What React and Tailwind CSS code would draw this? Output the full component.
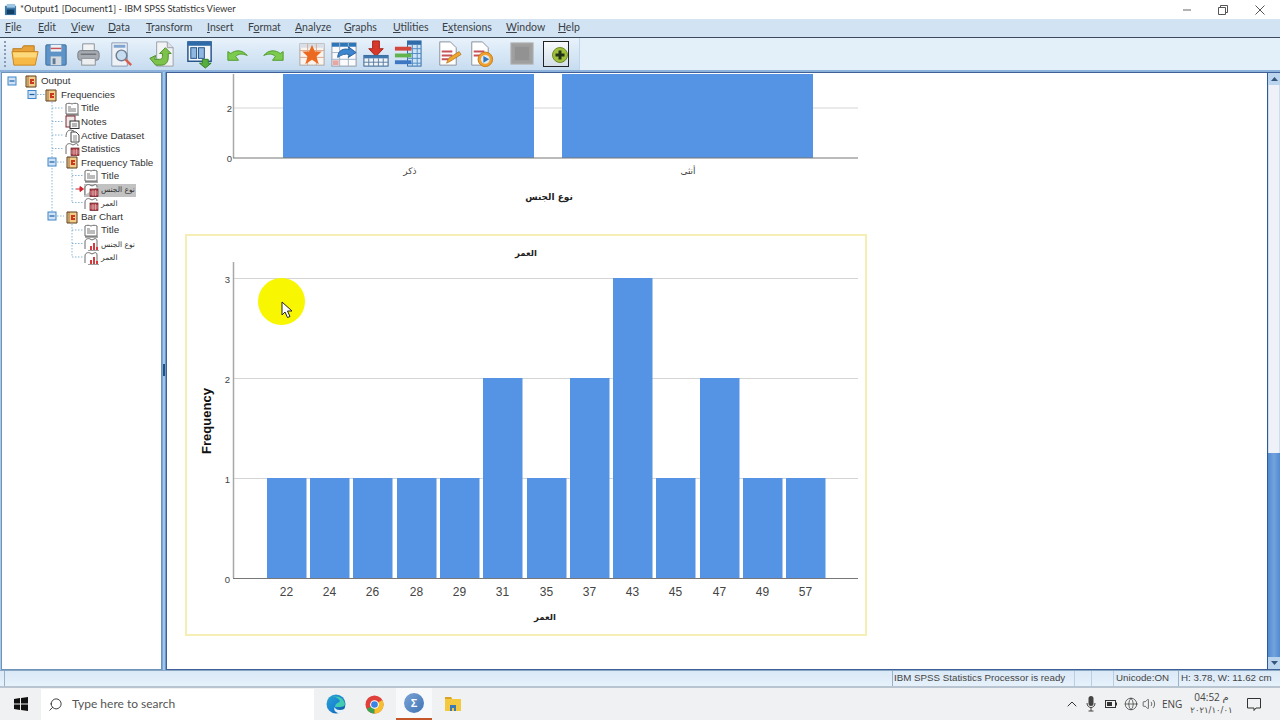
import React from "react";
import { Search, ChevronUp, Globe, Volume2 } from "lucide-react";

const menu = [
  ["", "F", "ile", "w-[33px]"], ["", "E", "dit", "w-[33px]"], ["", "V", "iew", "w-[37px]"], ["", "D", "ata", "w-[38px]"],
  ["", "T", "ransform", "w-[61px]"], ["", "I", "nsert", "w-[41px]"], ["F", "o", "rmat", "w-[47px]"], ["", "A", "nalyze", "w-[49px]"],
  ["", "G", "raphs", "w-[49px]"], ["", "U", "tilities", "w-[49px]"], ["E", "x", "tensions", "w-[64px]"], ["", "W", "indow", "w-[52px]"], ["", "H", "elp", "w-[30px]"],
];

const Page = ({ fill = "#fff" }) => (
  <path d="M7 3h11l6 6v18H7z" fill={fill} stroke="#8a8f98" strokeWidth="1" />
);

const tools = [
  ["w-[31px]", <g key="a"><path d="M3 10h9l2-3h11v6H3z" fill="#e8a33a" stroke="#b97a1c" /><path d="M2 13h27l-3 14H4z" fill="#f7b945" stroke="#c98622" /><path d="M3 14h25l-1 5H4z" fill="#fcd97c" /></g>],
  ["w-[32px]", <g key="b"><rect x="5" y="6" width="21" height="21" rx="1" fill="#5d93c6" stroke="#3d6f9f" /><rect x="10" y="6" width="11" height="7" fill="#eef1f4" /><rect x="10" y="9" width="11" height="1.5" fill="#c8505a" /><rect x="10" y="18" width="11" height="9" fill="#d4d9de" /><rect x="12" y="20" width="3" height="6" fill="#5d7a96" /></g>],
  ["w-[33px]", <g key="c"><path d="M10 5h12v8H10z" fill="#f2f3f5" stroke="#8b9097" /><rect x="5" y="12" width="22" height="10" rx="3" fill="#a6abb1" stroke="#787d84" /><rect x="9" y="20" width="14" height="7" fill="#eceef0" stroke="#8b9097" /><rect x="8" y="15" width="16" height="1.5" fill="#6f747a" /></g>],
  ["w-[40px]", <g key="d"><path d="M6 4h16v24H6z" fill="#eef1f6" stroke="#8a9bb3" /><rect x="8" y="6" width="12" height="3" fill="#7fa4cf" /><circle cx="16" cy="17" r="5.5" fill="#c7dcef" stroke="#6d7f95" strokeWidth="1.5" /><path d="M20 21l6 6" stroke="#d8604f" strokeWidth="2.5" /></g>],
  ["w-[39px]", <g key="e"><path d="M11 3h11l6 6v19H11z" fill="#f2f3f5" stroke="#9a9fa6" /><path d="M22 3v6h6" fill="#dcdfe3" stroke="#9a9fa6" /><path d="M4 20l6 7h6c5 0 7-4 7-8v-4h3l-6-6-6 6h3v3c0 2-1 3-3 3h-5l1-4z" fill="#7cc24b" stroke="#4e8f2a" /></g>],
  ["w-[39px]", <g key="f"><rect x="3" y="3" width="24" height="20" fill="#f4f6f9" stroke="#24548c" strokeWidth="1.5" /><rect x="3" y="3" width="24" height="4" fill="#2f6aa8" /><rect x="6" y="9" width="6" height="11" fill="#8fb7e0" stroke="#24548c" /><rect x="14" y="9" width="6" height="11" fill="#8fb7e0" stroke="#24548c" /><path d="M18 21h6v4h3l-6 5-6-5h3z" fill="#58ad3f" stroke="#2f7d25" /></g>],
  ["w-[33px]", <path key="g" d="M4 22v-9l3 2c5-4 12-4 17 2-5-2-9-2-12 1l3 4z" fill="#7ccb4e" stroke="#4f9a2d" />],
  ["w-[40px]", <path key="h" d="M27 22v-9l-3 2c-5-4-12-4-17 2 5-2 9-2 12 1l-3 4z" fill="#7ccb4e" stroke="#4f9a2d" />],
  ["w-[32px]", <g key="i"><rect x="3" y="5" width="25" height="22" fill="#f9f4ee" stroke="#a9a6a2" /><rect x="3" y="5" width="25" height="4" fill="#d8dfe8" /><path d="M3 12h25M3 19h25M11 5v22M20 5v22" stroke="#d9a78e" /><path d="M15.500 6l3 7h7l-5.500 5 2.500 8-7-4.500-7 4.500 2.500-8-5.500-5h7z" fill="#ec6a1f" /></g>],
  ["w-[32px]", <g key="j"><rect x="3" y="4" width="25" height="24" fill="#fbfbfd" stroke="#8e98a6" /><rect x="3" y="4" width="25" height="4" fill="#2e76b8" /><path d="M3 14h25M3 21h25M11 4v24M20 4v24" stroke="#9fb3c9" /><rect x="4" y="22" width="6" height="5" fill="#e9a6a0" /><path d="M9 19c0-7 6-10 12-8l-1-3 8 6-8 5 1-3c-4-1-8 0-12 3z" fill="#3d86cf" stroke="#25609f" /></g>],
  ["w-[32px]", <g key="k"><path d="M12 2h7v8h4l-7.500 8-7.500-8h4z" fill="#d6382b" stroke="#a62319" /><rect x="3" y="17" width="25" height="11" fill="#f0f3f7" stroke="#32608f" /><rect x="3" y="17" width="25" height="3" fill="#3d77ad" /><path d="M3 24h25M8 20v8M13 20v8M18 20v8M23 20v8" stroke="#5b7fa3" /></g>],
  ["w-[40px]", <g key="l"><rect x="15" y="2" width="14" height="26" fill="#cfe3f4" stroke="#2f6ba8" /><rect x="15" y="2" width="14" height="4" fill="#2f6ba8" /><path d="M15 10h14M15 15h14M15 20h14M15 25h14M20 6v22M25 6v22" stroke="#4f8cc4" /><rect x="2" y="8" width="17" height="4" fill="#d4473d" /><rect x="2" y="15" width="17" height="4" fill="#62b34b" /><rect x="2" y="22" width="17" height="4" fill="#3d77c4" /></g>],
  ["w-[32px]", <g key="m"><Page /><path d="M9 12h11v2H9zM9 16h11v2H9zM9 20h7v2H9z" fill="#c7525a" /><path d="M14 25l2-5 11-7 2 3-11 7z" fill="#f0a62f" stroke="#a96f16" strokeWidth=".7" /></g>],
  ["w-[42px]", <g key="n"><Page /><path d="M9 12h11v2H9zM9 16h8v2H9z" fill="#c7525a" /><circle cx="21" cy="21" r="7.500" fill="#f0a02e" stroke="#c77a14" /><circle cx="21" cy="21" r="4.500" fill="#dceaf7" /><path d="M19 17.500l6 3.500-6 3.500z" fill="#2f76bd" /></g>],
  ["w-[36px]", <g key="o"><rect x="4" y="4" width="23" height="22" fill="#9f9f9f" stroke="#b5b5b5" /><rect x="8" y="8" width="15" height="14" fill="#929292" /></g>],
];

function BookIcon({ kind }) {
  return (
    <svg viewBox="0 0 15 14" className="w-[15px] h-[14px] shrink-0">
      {kind === "title" ? (
        <g>
          <path d="M1 2c2-1 4-1 6 0 2-1 4-1 6 0v10H1z" fill="#fff" stroke="#6b6b6b" />
          <path d="M3 5h3M3 7h8M3 9h8" stroke="#555" strokeWidth=".8" />
          <path d="M1 13h13" stroke="#555" />
        </g>
      ) : kind === "notes" ? (
        <g>
          <rect x="1" y="1" width="9" height="11" fill="#efe9e9" stroke="#7d2b33" />
          <rect x="5" y="6" width="9" height="7.500" fill="#f7f7f7" stroke="#333" />
          <path d="M7 9h5M7 11h5" stroke="#555" strokeWidth=".8" />
        </g>
      ) : kind === "doc" ? (
        <g>
          <path d="M1 8c0-5 2-7 5-7l3 1v4" fill="#fff" stroke="#6b6b6b" />
          <path d="M6 3h5l3 3v7H6z" fill="#fff" stroke="#444" />
          <path d="M8 7h4M8 9h4M8 11h4" stroke="#666" strokeWidth=".8" />
        </g>
      ) : kind === "table" ? (
        <g>
          <path d="M1 12V5c0-3 3-4 5-3l2 1 2-1c2-1 3 0 3 2" fill="#fff" stroke="#6b6b6b" />
          <rect x="6" y="6" width="8" height="7.500" fill="#b4434b" stroke="#652228" strokeWidth=".7" />
          <path d="M6 9h8M6 11h8M9 7v6M11.500 7v6" stroke="#e9c9cb" strokeWidth=".6" />
        </g>
      ) : (
        <g>
          <path d="M1 12V5c0-3 3-4 5-3l2 1 2-1c2-1 3 0 3 2v8" fill="#fff" stroke="#6b6b6b" />
          <path d="M6 13V9h2v4zM9 13V6h2v7zM12 13v-3h2v3z" fill="#d43b3f" />
          <path d="M4 13.500h11" stroke="#777" strokeWidth=".7" />
        </g>
      )}
    </svg>
  );
}

const FolderNode = () => (
  <svg viewBox="0 0 12 13" className="w-[12px] h-[13px] shrink-0">
    <path d="M1 1h10v11H1z" fill="#f3cc8a" stroke="#5a3c1c" />
    <path d="M3 1v11" stroke="#5a3c1c" strokeWidth=".6" />
    <path d="M5 4h4v2H7v1h2v2H5z" fill="#c8391f" />
  </svg>
);

const tree = [
  ["Output", "folder", "pl-[23px]", "ml-[4px]"],
  ["Frequencies", "folder", "pl-[43px]", "ml-[4px]"],
  ["Title", "title", "pl-[63px]", "ml-[1px]"],
  ["Notes", "notes", "pl-[63px]", "ml-[1px]"],
  ["Active Dataset", "doc", "pl-[63px]", "ml-[1px]"],
  ["Statistics", "table", "pl-[63px]", "ml-[1px]"],
  ["Frequency Table", "folder", "pl-[64px]", "ml-[3px]"],
  ["Title", "title", "pl-[82px]", "ml-[2px]"],
  ["نوع الجنس", "table", "pl-[82px]", "ml-[2px]", true],
  ["العمر", "table", "pl-[82px]", "ml-[2px]"],
  ["Bar Chart", "folder", "pl-[64px]", "ml-[3px]"],
  ["Title", "title", "pl-[82px]", "ml-[2px]"],
  ["نوع الجنس", "bar", "pl-[82px]", "ml-[2px]"],
  ["العمر", "bar", "pl-[82px]", "ml-[2px]"],
];

const Box = ({ x, y }) => (
  <g>
    <rect x={x - 4} y={y - 4} width="8" height="8" fill="#cfe2f6" stroke="#3c86c9" />
    <path d={`M${x - 2.500} ${y}h5`} stroke="#1d5f9f" strokeWidth="1.200" />
  </g>
);

function TreeLines() {
  const dash = { stroke: "#6fa3c9", strokeWidth: 0.8, strokeDasharray: "1.500 1.500" };
  return (
    <svg className="absolute left-0 top-0 pointer-events-none" width="159" height="200" viewBox="2 73 159 200">
      <path d="M37 94.500h8M52 99v113M52 108h12M52 121.500h12M52 135h12M52 148.500h12M57 162h7M57 216h7M72 167v36M72 175.500h12M72 189h4M72 202.500h12M72 221v36M72 230h12M72 243.500h12M72 257h12" fill="none" {...dash} />
      <Box x={12} y={81} />
      <Box x={32} y={94.500} />
      <Box x={52} y={162} />
      <Box x={52} y={216} />
      <path d="M76 189h4v-2.500l3.500 2.500-3.500 2.500V189" fill="#d4202a" stroke="#d4202a" />
    </svg>
  );
}

function Chart1() {
  return (
    <svg width="682" height="136" viewBox="185 74 682 136" className="block ml-[18px]" style={{ fontFamily: "'DejaVu Sans','Liberation Sans',sans-serif" }}>
      <path d="M233 108h625" stroke="#d5d5d5" />
      <rect x="283" y="74" width="251" height="84" fill="#5594e4" />
      <rect x="562" y="74" width="251" height="84" fill="#5594e4" />
      <path d="M233.500 74v84" stroke="#a8a8a8" strokeWidth="1.500" />
      <path d="M233 158h625" stroke="#777" />
      <g fontFamily="'Liberation Sans',sans-serif" fontSize="9.500" fill="#444" textAnchor="end">
        <text x="232" y="112">2</text>
        <text x="232" y="162">0</text>
      </g>
      <g fontSize="9" fill="#444" textAnchor="middle">
        <text x="410" y="174">ذكر</text>
        <text x="688" y="174">أنثى</text>
      </g>
      <text x="549" y="200" fontSize="9" fontWeight="700" fill="#222" textAnchor="middle">نوع الجنس</text>
    </svg>
  );
}

const bars = [[22, 267, 1], [24, 310, 1], [26, 353, 1], [28, 397, 1], [29, 440, 1], [31, 483, 2], [35, 527, 1], [37, 570, 2], [43, 613, 3], [45, 656, 1], [47, 700, 2], [49, 743, 1], [57, 786, 1]];

function Chart2() {
  return (
    <div className="relative w-[682px] h-[402px] ml-[18px] mt-[24px] border-2 border-[#f6efb4]">
      <svg width="678" height="398" viewBox="187 236 678 398" className="block" style={{ fontFamily: "'DejaVu Sans','Liberation Sans',sans-serif" }}>
        <path d="M233 278.500h625M233 378.500h625M233 478.500h625" stroke="#d5d5d5" />
        {bars.map(([l, x, v]) => (
          <rect key={l} x={x} y={578 - v * 100} width="39.500" height={v * 100} fill="#5594e4" />
        ))}
        <path d="M233.500 262v316" stroke="#a8a8a8" strokeWidth="1.500" />
        <path d="M233 578.500h625" stroke="#777" />
        <g fontFamily="'Liberation Sans',sans-serif" fontSize="9.500" fill="#444" textAnchor="end">
          <text x="230" y="283">3</text>
          <text x="230" y="383">2</text>
          <text x="230" y="483">1</text>
          <text x="230" y="583">0</text>
        </g>
        <g fontFamily="'Liberation Sans',sans-serif" fontSize="12" fill="#444" textAnchor="middle">
          {bars.map(([l, x]) => (
            <text key={l} x={x + 19.500} y="596">{l}</text>
          ))}
        </g>
        <text x="526" y="256" fontSize="8.500" fontWeight="700" fill="#222" textAnchor="middle">العمر</text>
        <text x="545" y="620" fontSize="8.500" fontWeight="700" fill="#222" textAnchor="middle">العمر</text>
        <text transform="translate(211 421) rotate(-90)" fontFamily="'Liberation Sans',sans-serif" fontSize="13" fontWeight="700" fill="#111" textAnchor="middle">Frequency</text>
      </svg>
      <div className="absolute left-[71px] top-[42px] w-[47px] h-[47px] rounded-full bg-[#f8f600]" />
      <svg className="absolute left-[94px] top-[65px]" width="12" height="18" viewBox="0 0 12 18">
        <path d="M1 1v13l3-3 2.500 5.500 2.500-1-2.500-5.500h4.500z" fill="#fff" stroke="#222" strokeWidth="1" />
      </svg>
    </div>
  );
}

export default function App() {
  return (
    <div className="w-[1280px] h-[720px] overflow-hidden flex flex-col bg-white text-[#222]" style={{ fontFamily: "'Liberation Sans',sans-serif" }}>
      {/* Title bar */}
      <div className="h-[19px] flex items-center bg-white shrink-0">
        <svg viewBox="0 0 14 14" className="w-[13px] h-[13px] ml-[4px]">
          <rect x="1" y="3" width="12" height="10" fill="#3b78a8" />
          <rect x="3" y="1" width="9" height="4" fill="#9ec6e2" />
          <rect x="3" y="7" width="8" height="5" fill="#123f66" />
        </svg>
        <span className="ml-[3px] text-[9.400px] text-[#333]" style={{ fontFamily: "Lato,sans-serif" }}>*Output1 [Document1] - IBM SPSS Statistics Viewer</span>
        <div className="ml-auto flex items-center text-[#555]">
          <svg width="10" height="10" viewBox="0 0 10 10" className="mr-[26px]"><path d="M1 5h8" stroke="#666" /></svg>
          <svg width="10" height="10" viewBox="0 0 10 10" className="mr-[27px]"><path d="M.5 2.500h7v7h-7zM2.500 2.500v-2h7v7h-2" fill="none" stroke="#555" /></svg>
          <svg width="10" height="10" viewBox="0 0 10 10" className="mr-[15px]"><path d="M.5 .5l9 9M9.500 .5l-9 9" stroke="#555" /></svg>
        </div>
      </div>

      {/* Menu bar */}
      <div className="h-[19px] flex items-center pl-[5px] bg-[#d2e3f3] border-b border-[#3a4a5c] text-[10.500px] text-[#3a3f45] shrink-0" style={{ fontFamily: "Lato,sans-serif" }}>
        {menu.map(([a, u, b, w]) => (
          <span key={u + b} className={w}>{a}<span className="underline">{u}</span>{b}</span>
        ))}
      </div>

      {/* Toolbar */}
      <div className="h-[34px] flex bg-[#e3eff9] border-b-[2px] border-[#8cb2dc] shrink-0">
        <div className="w-[580px] h-full pl-[4px] flex items-center bg-gradient-to-b from-[#e8f2fb] to-[#c7dcf0] border-r border-[#c3d5e8]">
          <div className="w-[2px] h-[26px] mr-[4px] border-l-2 border-dotted border-[#8a9cb0] shrink-0" />
          {tools.map((t, i) => (
            <div key={i} className={t[0] + " h-[30px] flex items-center shrink-0"}>
              <svg viewBox="0 0 31 31" className="w-[30px] h-[30px]">{t[1]}</svg>
            </div>
          ))}
          <div className="w-[26px] h-[26px] border border-[#222] bg-gradient-to-b from-[#f8fafc] to-[#d4dfea] flex items-end justify-end pb-[3px] pr-[0.5px] shrink-0">
            <svg viewBox="0 0 16 16" className="w-[16px] h-[16px]">
              <circle cx="8" cy="8" r="7.500" fill="#a0c03c" stroke="#6f8a24" />
              <path d="M6.500 3.500h3v3h3v3h-3v3h-3v-3h-3v-3h3z" fill="#22331a" />
            </svg>
          </div>
        </div>
      </div>

      {/* Panes */}
      <div className="h-[598px] flex bg-[#a9c9e8] shrink-0">
        <div className="relative w-[161px] ml-[1px] bg-white border border-[#6f93b8] pt-[2px] text-[9.800px] text-[#333] overflow-hidden">
          <TreeLines />
          {tree.map(([t, k, pl, ml, sel], i) => (
            <div key={i} className={"relative h-[13.540px] flex items-center " + pl}>
              <div className={sel ? "flex items-center h-[13px] w-[52px] bg-[#c2c2c2]" : "flex items-center h-[13px]"}>
                {k === "folder" ? <FolderNode /> : <BookIcon kind={k} />}
                {/[A-Za-z]/.test(t) ? (
                  <span className={ml}>{t}</span>
                ) : (
                  <span className="text-[7.500px] ml-[2px]" style={{ fontFamily: "'DejaVu Sans',sans-serif" }}>{t}</span>
                )}
              </div>
            </div>
          ))}
        </div>

        <div className="relative w-[4px] bg-gradient-to-r from-[#5d96cf] via-[#bcd7ef] to-[#4d85c2] shrink-0">
          <div className="absolute top-[292px] left-[1px] w-[2px] h-[12px] bg-[#24507f]" />
        </div>

        <div className="flex-1 flex bg-white border-t border-l border-b border-[#3f5f99] overflow-hidden">
          <div className="flex-1 pt-[1px] overflow-hidden">
            <Chart1 />
            <Chart2 />
          </div>
          <div className="w-[13px] flex flex-col bg-[#4f8bd0] border-l border-[#2c5a9e] shrink-0">
            <div className="h-[12px] bg-[#bcd5ef] flex items-center justify-center shrink-0">
              <svg width="7" height="4" viewBox="0 0 7 4"><path d="M3.500 0l3.500 4H0z" fill="#37557c" /></svg>
            </div>
            <div className="h-[368px] bg-[#eef1f8] border-x border-[#cfdced] shrink-0" />
            <div className="flex-1 bg-gradient-to-r from-[#4f8bd0] via-[#74a3de] to-[#4f8bd0]" />
            <div className="h-[12px] bg-[#bcd5ef] flex items-center justify-center shrink-0">
              <svg width="7" height="4" viewBox="0 0 7 4"><path d="M3.500 4l3.500-4H0z" fill="#37557c" /></svg>
            </div>
          </div>
        </div>
      </div>

      {/* Status bar */}
      <div className="h-[18px] flex items-center bg-gradient-to-b from-[#dbe9f6] to-[#e6f1fb] border-t border-[#8aa7c4] border-b-2 border-b-[#b8c4d0] text-[9.750px] text-[#444] shrink-0">
        <div className="w-[4px]" />
        <div className="w-[888px] h-full border-l border-[#9ab2c8]" />
        <div className="w-[182px] h-full border-l border-[#9ab2c8] pl-[1px] flex items-center">IBM SPSS Statistics Processor is ready</div>
        <div className="w-[17px] h-full border-l border-[#b9cee2]" />
        <div className="w-[22px] h-full border-l border-[#b9cee2]" />
        <div className="w-[65px] h-full border-l border-[#b9cee2] pl-[2px] flex items-center">Unicode:ON</div>
        <div className="flex-1 h-full border-l border-[#9ab2c8] pl-[2px] flex items-center">H: 3.78, W: 11.62 cm</div>
      </div>

      {/* Taskbar */}
      <div className="flex-1 flex items-center bg-[#f0f1f2] text-[#333]">
        <div className="w-[41px] flex justify-center">
          <svg viewBox="0 0 14 14" className="w-[14px] h-[14px]"><path d="M0 2l6-1v5.500H0zM7 .9L14 0v6.500H7zM0 7.500h6V13l-6-1zM7 7.500h7V14l-7-1z" fill="#111" /></svg>
        </div>
        <div className="w-[273px] h-[31px] bg-white flex items-center pl-[7px] text-[12px] text-[#555]" style={{ fontFamily: "Lato,sans-serif" }}>
          <Search size={15} strokeWidth={1.500} className="-scale-x-100 text-[#333]" />
          <span className="ml-[9px]">Type here to search</span>
        </div>
        <div className="w-[12px]" />
        <svg viewBox="0 0 20 20" className="w-[20px] h-[20px]">
          <defs>
            <linearGradient id="ed" x1="0" y1="0" x2="1" y2="1"><stop offset="0" stopColor="#2aa5c9" /><stop offset=".5" stopColor="#1b86d6" /><stop offset="1" stopColor="#0c4b95" /></linearGradient>
          </defs>
          <circle cx="10" cy="10" r="9.500" fill="url(#ed)" />
          <path d="M7 3c5-2 11 1 12 7 0 2-2 3-5 3h-5c0-4 4-4 5-6-2-3-5-5-7-4z" fill="#42cdb0" />
          <path d="M8.500 13c1 3 5 4 10 2-1 2-3 4-6 4.300-3-1-5-3-4-6.300z" fill="#e8f4fb" />
        </svg>
        <div className="w-[19px]" />
        <svg viewBox="0 0 20 20" className="w-[19px] h-[19px]">
          <circle cx="10" cy="10" r="9.500" fill="#e0403a" />
          <path d="M10 10L1.800 14.800A9.500 9.500 0 0 0 10 19.500z" fill="#38a350" />
          <path d="M10 10v9.500A9.500 9.500 0 0 0 18.200 5.200z" fill="#f5c02c" />
          <circle cx="10" cy="10" r="4.600" fill="#fff" />
          <circle cx="10" cy="10" r="3.500" fill="#3b82e6" />
        </svg>
        <div className="w-[12px]" />
        <div className="w-[36px] h-[32px] bg-[#f8f9fa] border-b-2 border-[#c4562a] flex items-center justify-center">
          <div className="w-[20px] h-[20px] rounded-full bg-gradient-to-br from-[#7ba4d6] to-[#3f74b5] text-white text-[11px] flex items-center justify-center font-bold">Σ</div>
        </div>
        <div className="w-[12px]" />
        <svg viewBox="0 0 18 16" className="w-[18px] h-[16px]">
          <path d="M1 1h6l1 2h9v12H1z" fill="#f4c93f" />
          <path d="M1 1h6l1 2H1z" fill="#d9a426" />
          <path d="M6 9h6v6h-2v-3H8v3H6z" fill="#3b79b8" />
        </svg>

        <div className="ml-auto flex items-center relative h-full">
          <ChevronUp size={16} strokeWidth={1.500} className="text-[#333] mr-[6px]" />
          <svg viewBox="0 0 10 16" className="w-[10px] h-[16px] mr-[9px]">
            <rect x="2.500" y="0" width="5" height="10" rx="2.500" fill="#444" />
            <path d="M1 7c0 6 8 6 8 0M5 11v4M2.500 15h5" stroke="#444" fill="none" />
          </svg>
          <svg viewBox="0 0 12 10" className="w-[12px] h-[10px] mr-[7px]">
            <rect x=".5" y="1.500" width="10" height="7" fill="none" stroke="#333" />
            <rect x="2" y="3" width="5" height="4" fill="#333" />
            <rect x="11" y="3.500" width="1" height="3" fill="#333" />
          </svg>
          <Globe size={14} strokeWidth={1.200} className="text-[#333] mr-[4px]" />
          <Volume2 size={14} strokeWidth={1.200} className="text-[#333] mr-[6px]" />
          <span className="text-[10px] text-[#444] w-[21px]" style={{ fontFamily: "'Open Sans',sans-serif" }}>ENG</span>
          <div className="w-[57px] flex flex-col items-center leading-[13px] text-[#444]" style={{ fontFamily: "'Open Sans','DejaVu Sans',sans-serif" }}>
            <span className="text-[10px]" dir="ltr">04:52 م</span>
            <span className="text-[8.500px]" dir="ltr" style={{ fontFamily: "'DejaVu Sans',sans-serif" }}>٢٠٢١/١٠/٠١</span>
          </div>
          <svg viewBox="0 0 14 14" className="w-[14px] h-[14px] ml-[7px] mr-[19px]">
            <path d="M.5 1.500h13v9.500H9l-2 2.500v-2.500H.5z" fill="none" stroke="#333" />
          </svg>
        </div>
      </div>
    </div>
  );
}
